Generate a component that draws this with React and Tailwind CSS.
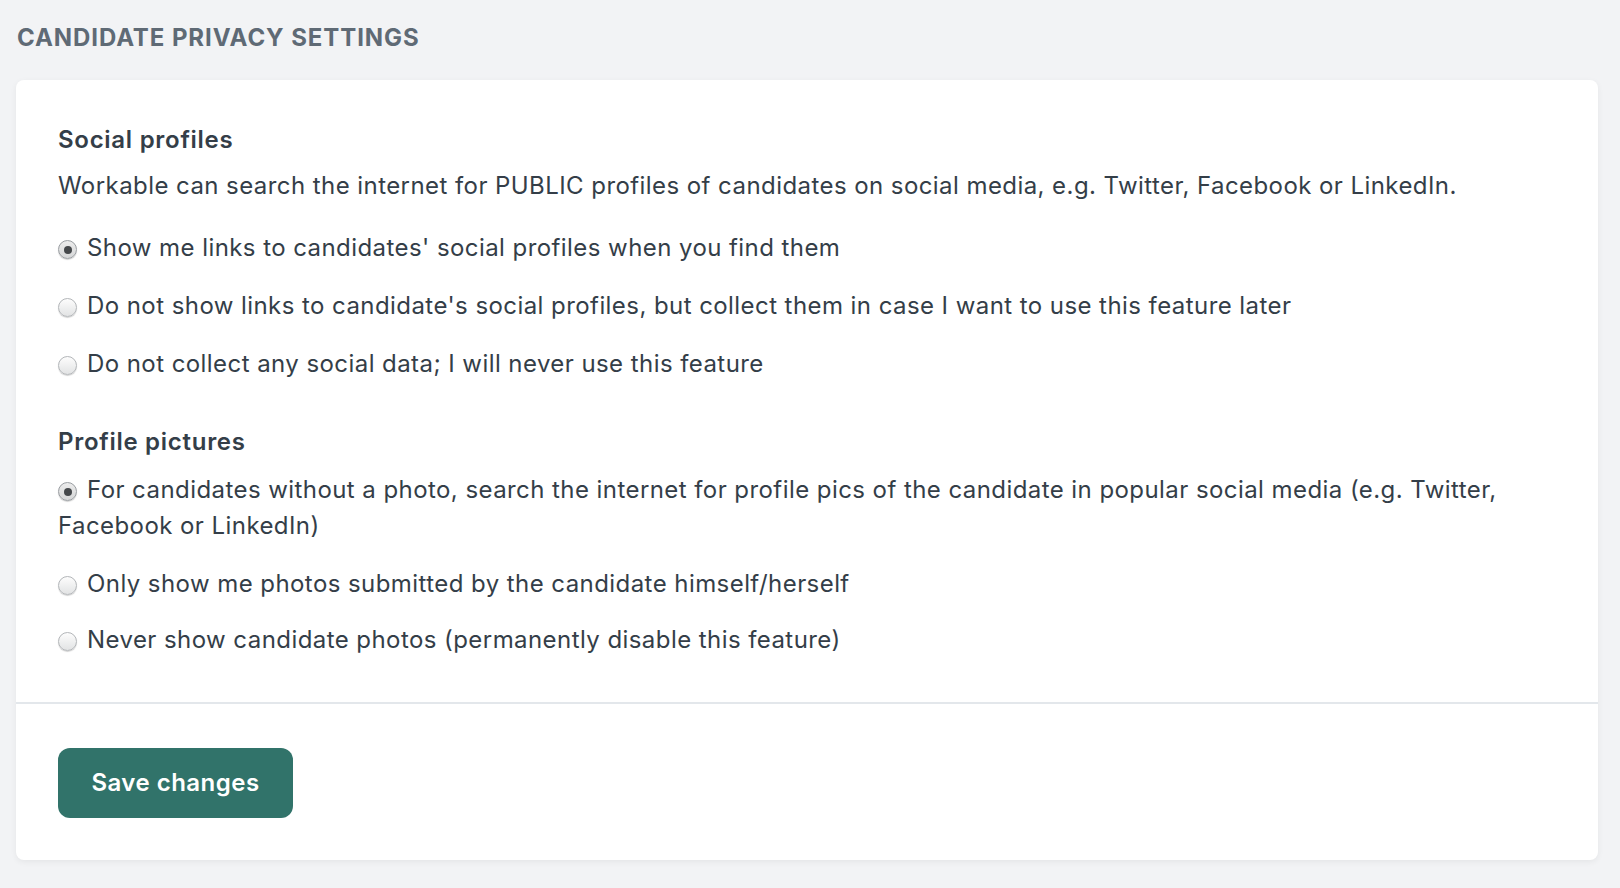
import React from "react";

function Radio({ checked }) {
  return (
    <span
      className={
        "relative inline-block align-[-3px] w-[19px] h-[19px] mr-[10px] rounded-full border shadow-[0_1px_1px_rgba(0,0,0,0.18)] " +
        (checked
          ? "border-[#9a9ea2] bg-gradient-to-b from-[#ececec] to-[#d6d7d8]"
          : "border-[#b3b6b9] bg-gradient-to-b from-[#fdfdfd] to-[#e2e3e4]")
      }
    >
      {checked && (
        <span className="absolute left-1/2 top-1/2 -translate-x-1/2 -translate-y-1/2 w-[8px] h-[8px] rounded-full bg-[#45484b]" />
      )}
    </span>
  );
}

function Option({ checked, children, className = "" }) {
  return (
    <label className={"block leading-[36px] " + className}>
      <Radio checked={checked} />
      {children}
    </label>
  );
}

export default function App() {
  return (
    <div className="min-h-screen bg-[#f2f3f5] pt-[20px] pb-[28px] text-[#343e48]" style={{ fontFamily: "Inter, 'Liberation Sans', sans-serif" }}>
      <h1 className="ml-[17px] text-[24px] leading-[36px] font-bold tracking-[0.038em] text-[#5f6a75]">
        CANDIDATE PRIVACY SETTINGS
      </h1>
      <div className="mt-[24px] ml-4 mr-[22px] bg-white rounded-lg shadow-[0_2px_6px_rgba(0,0,0,0.06)]">
        <div className="pl-[42px] pr-[42px] pt-[42px] pb-[44px] text-[24px] tracking-[0.018em]">
          <h2 className="leading-[36px] font-semibold tracking-[0.03em]">Social profiles</h2>
          <p className="mt-[10px] leading-[36px]">
            Workable can search the internet for PUBLIC profiles of candidates on social media, e.g. Twitter, Facebook or LinkedIn.
          </p>
          <Option checked className="mt-[26px]">Show me links to candidates' social profiles when you find them</Option>
          <Option className="mt-[22px]">Do not show links to candidate's social profiles, but collect them in case I want to use this feature later</Option>
          <Option className="mt-[22px]">Do not collect any social data; I will never use this feature</Option>

          <h2 className="mt-[42px] leading-[36px] font-semibold tracking-[0.03em]">Profile pictures</h2>
          <Option checked className="mt-[12px]">
            For candidates without a photo, search the internet for profile pics of the candidate in popular social media (e.g. Twitter, Facebook or LinkedIn)
          </Option>
          <Option className="mt-[22px]">Only show me photos submitted by the candidate himself/herself</Option>
          <Option className="mt-[20px]">Never show candidate photos (permanently disable this feature)</Option>
        </div>
        <div className="border-t-2 border-[#e3e7eb] pl-[42px] pt-[44px] pb-[42px]">
          <button className="w-[235px] h-[70px] rounded-[12px] bg-[#31736a] text-white text-[24px] font-semibold tracking-[0.02em]">
            Save changes
          </button>
        </div>
      </div>
    </div>
  );
}
